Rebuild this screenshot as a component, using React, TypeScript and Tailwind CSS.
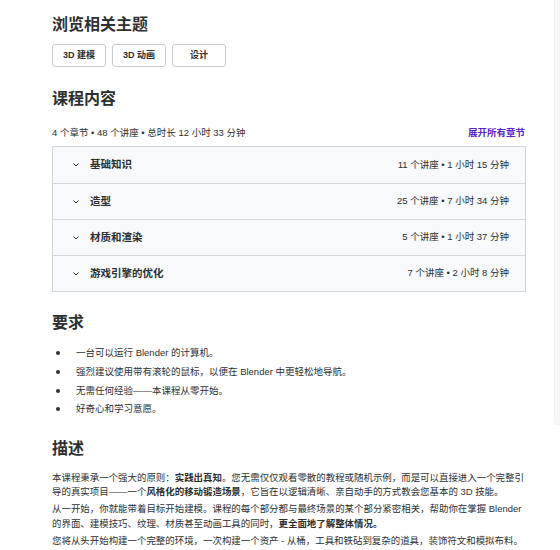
import React from "react";

const font = { fontFamily: '"Liberation Sans", "Noto Sans CJK SC", sans-serif' };

const sections = [
  { title: "基础知识", meta: "11 个讲座 • 1 小时 15 分钟" },
  { title: "造型", meta: "25 个讲座 • 7 小时 34 分钟" },
  { title: "材质和渲染", meta: "5 个讲座 • 1 小时 37 分钟" },
  { title: "游戏引擎的优化", meta: "7 个讲座 • 2 小时 8 分钟" },
];

const reqs = [
  "一台可以运行 Blender 的计算机。",
  "强烈建议使用带有滚轮的鼠标，以便在 Blender 中更轻松地导航。",
  "无需任何经验——本课程从零开始。",
  "好奇心和学习意愿。",
];

function Chevron() {
  return (
    <svg width="8" height="6" viewBox="0 0 8 6" className="shrink-0">
      <polyline points="1.5,1.5 4,4 6.5,1.5" fill="none" stroke="#2d2f31" strokeWidth="1" />
    </svg>
  );
}

export default function App() {
  return (
    <div className="relative w-[560px] h-[550px] overflow-hidden bg-white text-[#2d2f31]" style={font}>
      <div className="absolute right-0 top-0 w-[6px] h-[425px] bg-[#f6f7f9] border-l border-[#eef0f3] rounded-bl-[3px]" />
      <div className="ml-[52px] w-[474px] pt-[14px]">
        <h2 className="text-[16px] leading-[22px] font-bold">浏览相关主题</h2>
        <div className="flex gap-[6px] mt-[8px]">
          {["3D 建模", "3D 动画", "设计"].map((t) => (
            <div
              key={t}
              className="w-[54px] h-[23px] flex items-center justify-center border border-[#c9cdd1] rounded-[3px] text-[9px] font-bold"
            >
              {t}
            </div>
          ))}
        </div>
        <h2 className="text-[16px] leading-[22px] font-bold mt-[21px]">课程内容</h2>
        <div className="flex justify-between items-center mt-[13px] h-[20px] text-[9.5px]">
          <span>4 个章节 • 48 个讲座 • 总时长 12 小时 33 分钟</span>
          <span className="text-[#5624d0] font-bold mr-[1px]">展开所有章节</span>
        </div>
        <div className="mt-[3px] border border-[#d1d7dc] bg-[#f7f9fa]">
          {sections.map((s, i) => (
            <div
              key={s.title}
              className={`h-[36px] flex items-center pl-[19px] pr-[16px] ${i > 0 ? "border-t border-[#d1d7dc]" : ""}`}
            >
              <Chevron />
              <span className="ml-[10px] text-[10.5px] font-bold">{s.title}</span>
              <span className="ml-auto text-[9.5px]">{s.meta}</span>
            </div>
          ))}
        </div>
        <h2 className="text-[16px] leading-[22px] font-bold mt-[20px]">要求</h2>
        <ul className="mt-[10px] flex flex-col text-[9.5px]">
          {reqs.map((r) => (
            <li key={r} className="flex items-center h-[18.7px]">
              <span className="w-[4px] h-[4px] rounded-full bg-[#2d2f31] ml-[4px] mr-[16px]" />
              {r}
            </li>
          ))}
        </ul>
        <h2 className="text-[16px] leading-[22px] font-bold mt-[19px]">描述</h2>
        <div className="mt-[11px] text-[9.45px] leading-[14.5px] flex flex-col gap-[2.5px]">
          <p>
            本课程秉承一个强大的原则：<b>实践出真知</b>。您无需仅仅观看零散的教程或随机示例，而是可以直接进入一个完整引导的真实项目——一个<b>风格化的移动锻造场景</b>，它旨在以逻辑清晰、亲自动手的方式教会您基本的 3D 技能。
          </p>
          <p>
            从一开始，你就能带着目标开始建模。课程的每个部分都与最终场景的某个部分紧密相关，帮助你在掌握 Blender 的界面、建模技巧、纹理、材质甚至动画工具的同时，<b>更全面地了解整体情况。</b>
          </p>
          <p>您将从头开始构建一个完整的环境，一次构建一个资产 - 从桶，工具和铁砧到复杂的道具，装饰符文和模拟布料。</p>
        </div>
      </div>
    </div>
  );
}
